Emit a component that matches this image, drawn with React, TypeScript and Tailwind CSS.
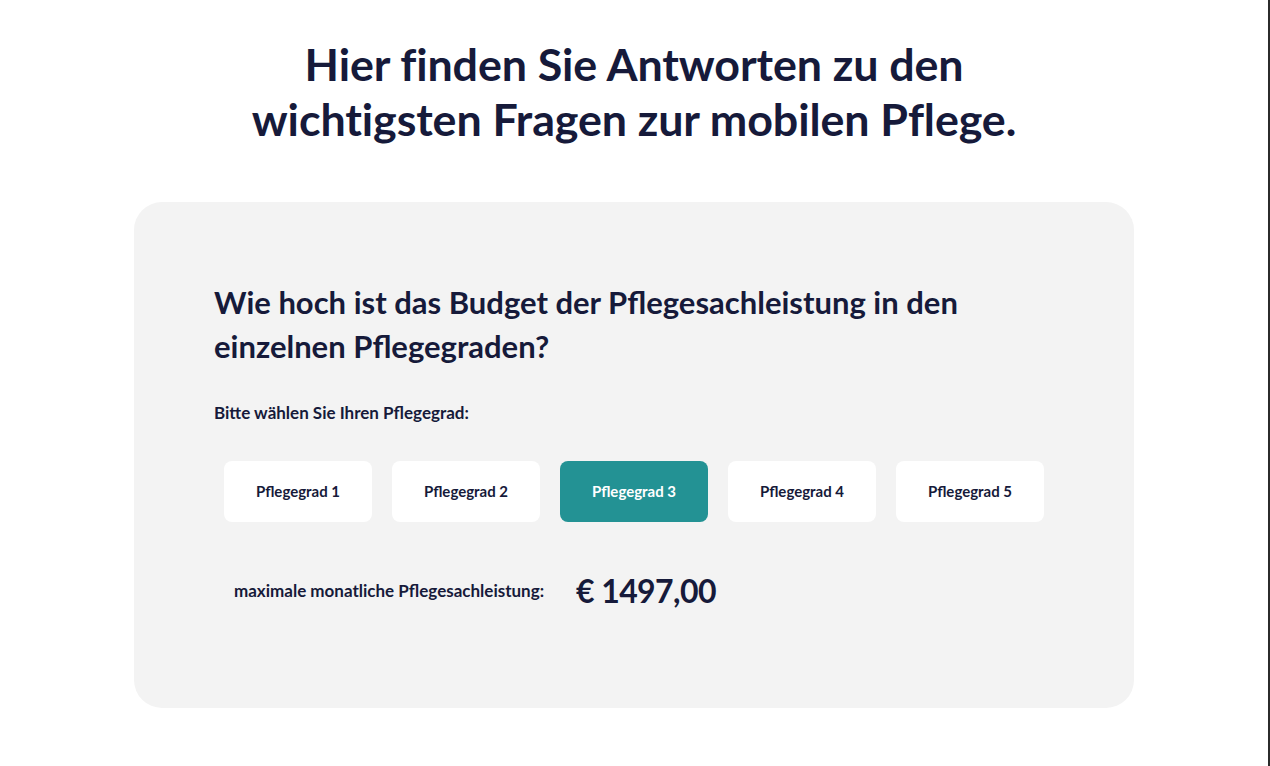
import React, { useState } from "react";

const grades = [
  { label: "Pflegegrad 1", value: "€ 0,00" },
  { label: "Pflegegrad 2", value: "€ 761,00" },
  { label: "Pflegegrad 3", value: "€ 1497,00" },
  { label: "Pflegegrad 4", value: "€ 1859,00" },
  { label: "Pflegegrad 5", value: "€ 2299,00" },
];

export default function App() {
  const [active, setActive] = useState(2);
  return (
    <div
      className="flex h-[766px] w-full bg-white text-[#161a3a]"
      style={{ fontFamily: "Lato, 'Noto Sans', sans-serif" }}
    >
      <div className="flex flex-1 flex-col items-center">
        <h1 className="mt-[37px] text-center text-[44.8px] font-bold leading-[55px] tracking-[-0.1px]">
          Hier finden Sie Antworten zu den
          <br />
          wichtigsten Fragen zur mobilen Pflege.
        </h1>
        <div className="mt-[55px] h-[506px] w-[1000px] rounded-[28px] bg-[#f3f3f3] px-[80px] pt-[78px]">
          <h2 className="text-[31px] font-bold leading-[44px]">
            Wie hoch ist das Budget der Pflegesachleistung in den
            <br />
            einzelnen Pflegegraden?
          </h2>
          <p className="mt-[34px] text-[17px] font-bold leading-[22px]">
            Bitte wählen Sie Ihren Pflegegrad:
          </p>
          <div className="mt-[37px] flex gap-[20px] pl-[10px]">
            {grades.map((g, i) => (
              <button
                key={g.label}
                onClick={() => setActive(i)}
                className={
                  i === active
                    ? "flex h-[61px] w-[148px] items-center justify-center rounded-[8px] bg-[#239294] text-[15px] font-bold text-white"
                    : "flex h-[61px] w-[148px] items-center justify-center rounded-[8px] bg-white text-[15px] font-bold text-[#161a3a]"
                }
              >
                {g.label}
              </button>
            ))}
          </div>
          <div className="mt-[45px] flex items-center pl-[20px]">
            <span className="text-[17px] font-bold">maximale monatliche Pflegesachleistung:</span>
            <span className="ml-[32px] text-[32px] font-bold tracking-[-0.6px]">
              {grades[active].value}
            </span>
          </div>
        </div>
      </div>
      <div className="w-[2px] bg-[#2b2b2b]" />
    </div>
  );
}
